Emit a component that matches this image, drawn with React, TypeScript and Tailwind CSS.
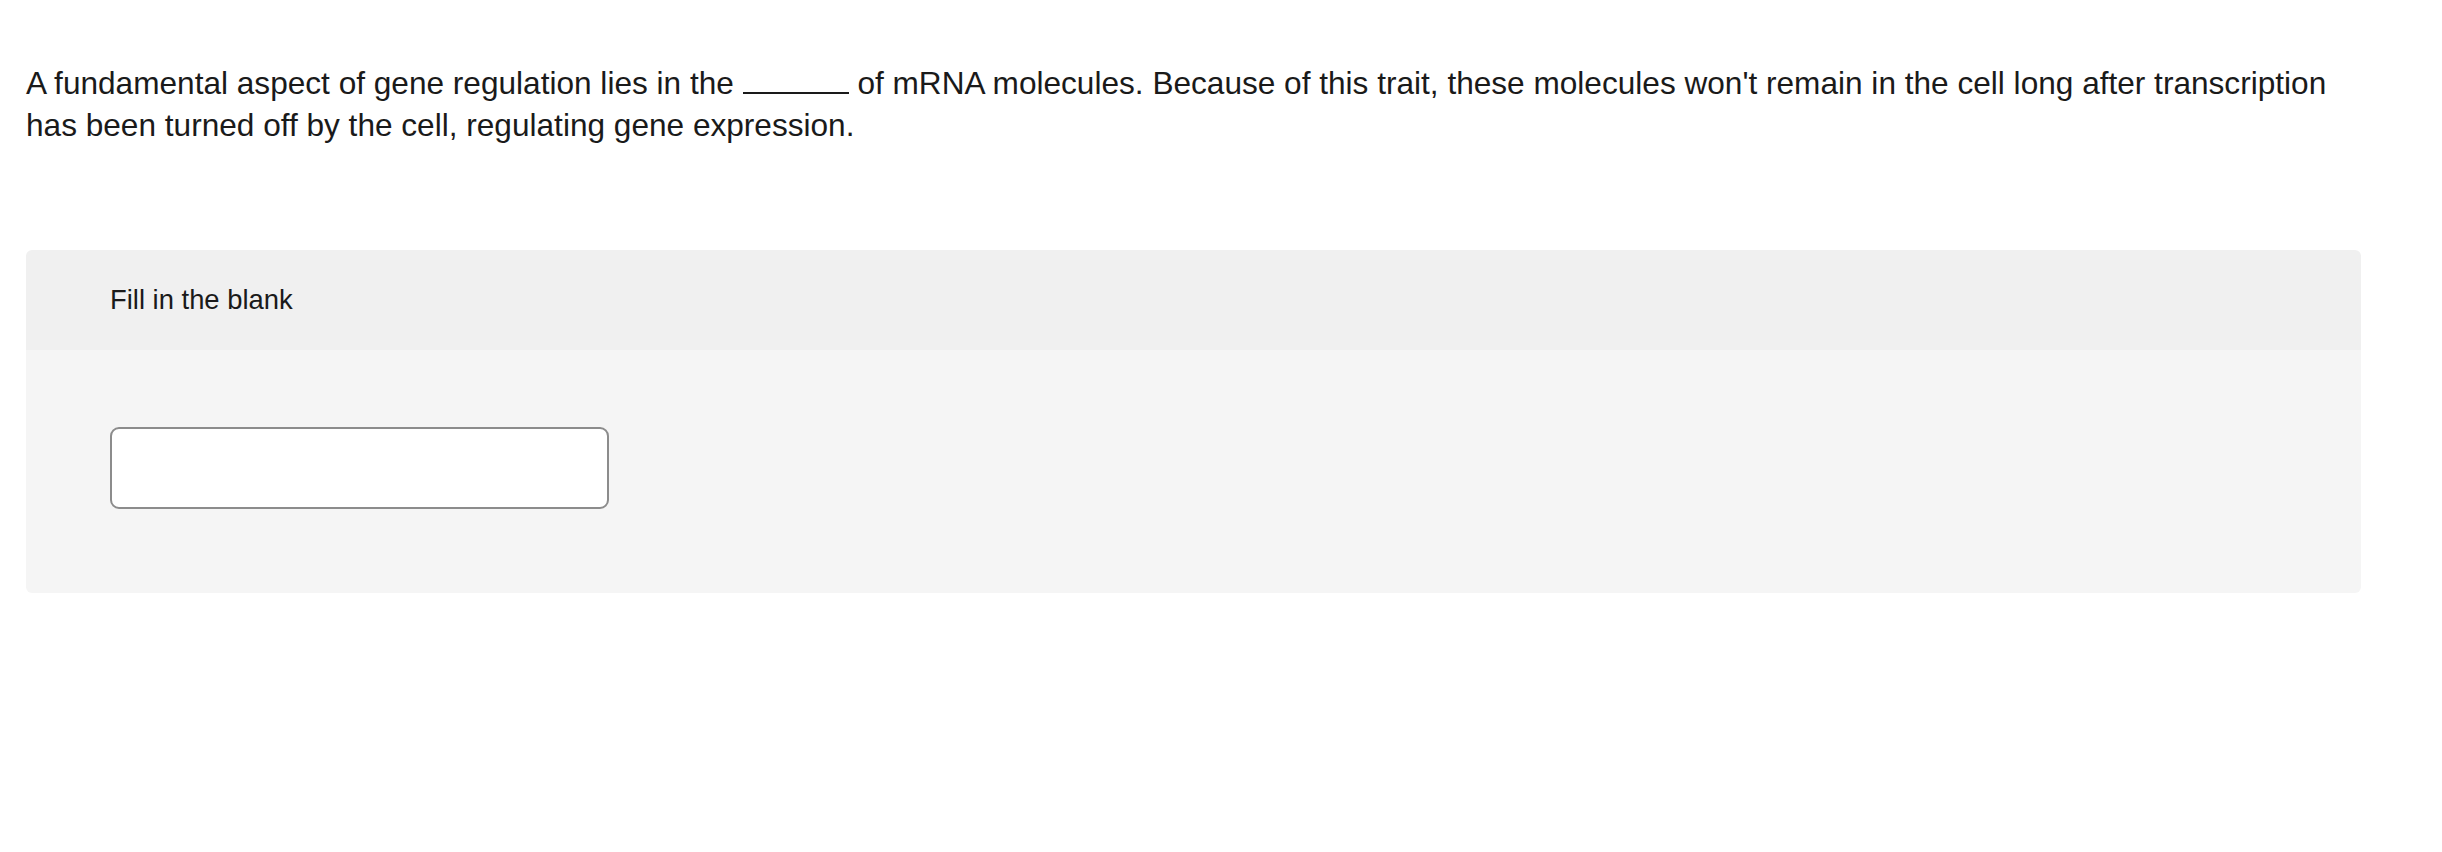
export default function App() {
  return (
    <div className="min-h-screen bg-white text-[#1a1a1a]" style={{ fontFamily: '"Liberation Sans", Arial, sans-serif' }}>
      <div className="w-[2335px] ml-[26px] pt-[62px]">
        <p className="text-[31.6px] leading-[42px]">
          A fundamental aspect of gene regulation lies in the{' '}
          <span className="inline-block w-[106px] border-b-2 border-[#1a1a1a] align-baseline"></span>{' '}
          of mRNA molecules. Because of this trait, these molecules won't remain in the cell long after
          transcription has been turned off by the cell, regulating gene expression.
        </p>

        <div className="mt-[104px] rounded-md overflow-hidden">
          <div className="h-[100px] bg-[#f0f0f0] pl-[84px] flex items-center">
            <span className="text-[27.4px]">Fill in the blank</span>
          </div>
          <div className="bg-[#f5f5f5] pl-[84px] pt-[77px] pb-[84px]">
            <input
              type="text"
              className="block w-[499px] h-[82px] bg-white border-2 border-[#8c8c8c] rounded-[9px] px-4 text-[26px] outline-none"
            />
          </div>
        </div>
      </div>
    </div>
  );
}
